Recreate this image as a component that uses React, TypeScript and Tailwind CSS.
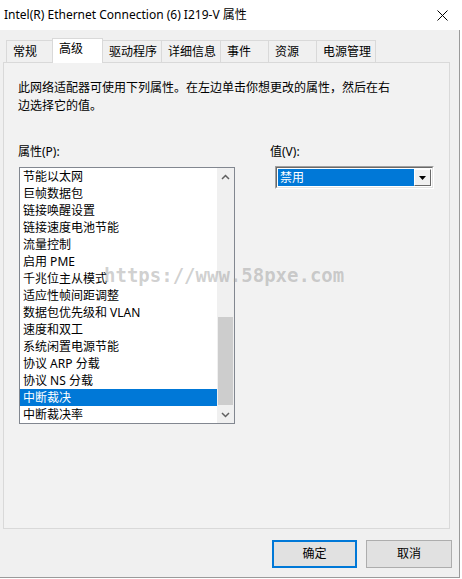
import React from "react";

const items = [
  "节能以太网",
  "巨帧数据包",
  "链接唤醒设置",
  "链接速度电池节能",
  "流量控制",
  "启用 PME",
  "千兆位主从模式",
  "适应性帧间距调整",
  "数据包优先级和 VLAN",
  "速度和双工",
  "系统闲置电源节能",
  "协议 ARP 分载",
  "协议 NS 分载",
  "中断裁决",
  "中断裁决率",
];

const tabs = [
  { label: "常规", w: "w-[47px]" },
  { label: "高级", w: "w-[51px]", active: true },
  { label: "驱动程序", w: "w-[60px]" },
  { label: "详细信息", w: "w-[60px]" },
  { label: "事件", w: "w-[49px]" },
  { label: "资源", w: "w-[49px]" },
  { label: "电源管理", w: "w-[60px]" },
];

function Chevron({ up }: { up?: boolean }) {
  return (
    <svg width="9" height="6" viewBox="0 0 9 6">
      <polyline
        points={up ? "1,5 4.5,1.5 8,5" : "1,1 4.5,4.5 8,1"}
        fill="none"
        stroke="#606060"
        strokeWidth="1.5"
      />
    </svg>
  );
}

export default function App() {
  return (
    <div className="relative w-[462px] h-[579px] bg-white text-[12px] leading-[18px] text-black font-['Noto_Sans','Noto_Sans_CJK_SC',sans-serif]">
      {/* title bar */}
      <div className="h-[30px] flex items-center justify-between pl-[4px] pr-[14px] bg-white">
        <span>Intel(R) Ethernet Connection (6) I219-V 属性</span>
        <svg width="11" height="11" viewBox="0 0 11 11">
          <path d="M0.5 0.5 L10.5 10.5 M10.5 0.5 L0.5 10.5" stroke="#000" strokeWidth="1" />
        </svg>
      </div>

      <div className="w-[460px] h-[548px] bg-[#f0f0f0] border-r border-b border-[#9a9a9a] flex flex-col">
        {/* tabs */}
        <div className="relative z-10 h-[32px] flex items-end pl-[6px]">
          {tabs.map((t, i) =>
            t.active ? (
              <div
                key={t.label}
                className={`${t.w} -ml-px h-[25px] -mb-px pl-[6px] pt-[1px] bg-white border-t border-l border-r border-[#d9d9d9] relative z-10`}
              >
                {t.label}
              </div>
            ) : (
              <div
                key={t.label}
                className={`${t.w} ${i > 0 ? "-ml-px" : ""} h-[22px] pl-[6px] pt-[2px] bg-[#f0f0f0] border-t border-l border-r border-[#d9d9d9]`}
              >
                {t.label}
              </div>
            )
          )}
        </div>

        {/* page */}
        <div className="ml-[3px] w-[447px] h-[467px] border border-[#d9d9d9] bg-[#f2f2f2] pt-[16px] pl-[14px]">
          <p className="w-[380px]">
            此网络适配器可使用下列属性。在左边单击你想更改的属性，然后在右边选择它的值。
          </p>

          <div className="mt-[28px] flex gap-[36px]">
            <div className="w-[216px]">
              <div>属性(P):</div>
              <div className="mt-[6px] ml-px w-[216px] h-[257px] bg-white border border-[#828790] flex overflow-hidden">
                <ul className="w-[197px]">
                  {items.map((it) => (
                    <li
                      key={it}
                      className={`h-[17px] leading-[17px] pl-[3px] whitespace-nowrap ${
                        it === "中断裁决" ? "bg-[#0078d7] text-white" : ""
                      }`}
                    >
                      {it}
                    </li>
                  ))}
                </ul>
                <div className="w-[17px] bg-[#f0f0f0] flex flex-col">
                  <div className="h-[17px] flex items-center justify-center">
                    <Chevron up />
                  </div>
                  <div className="flex-1 flex flex-col justify-end px-px pb-[1px]">
                    <div className="h-[88px] bg-[#cdcdcd]" />
                  </div>
                  <div className="h-[17px] flex items-center justify-center">
                    <Chevron />
                  </div>
                </div>
              </div>
            </div>

            <div className="w-[164px]">
              <div>值(V):</div>
              <div className="mt-[5px] ml-[5px] w-[159px] h-[23px] border-t border-l border-[#a0a0a0] border-b border-r border-b-white border-r-white">
                <div className="h-full border-t border-l border-[#696969] border-b border-r border-b-[#e3e3e3] border-r-[#e3e3e3] bg-white flex p-px">
                  <div className="flex-1 bg-[#0078d7] text-white leading-[17px] pl-[2px]">禁用</div>
                  <div className="w-[17px] bg-[#f0f0f0] border-t border-l border-white border-b border-r border-b-[#696969] border-r-[#696969] flex items-center justify-center">
                    <svg width="7" height="4" viewBox="0 0 7 4">
                      <path d="M0 0 L7 0 L3.5 4 Z" fill="#000" />
                    </svg>
                  </div>
                </div>
              </div>
            </div>
          </div>
        </div>

        {/* buttons */}
        <div className="mt-[11px] flex justify-end gap-[9px] pr-[7px]">
          <button className="w-[85px] h-[28px] bg-[#e1e1e1] border-2 border-[#0078d7]">确定</button>
          <button className="w-[86px] h-[28px] bg-[#e1e1e1] border border-[#adadad]">取消</button>
        </div>
      </div>

      {/* watermark */}
      <div className="absolute left-[104px] top-[266px] text-[19px] leading-[19px] font-bold text-[rgba(150,150,150,0.45)] font-['DejaVu_Sans_Mono',monospace] pointer-events-none">
        https://www.58pxe.com
      </div>
    </div>
  );
}
